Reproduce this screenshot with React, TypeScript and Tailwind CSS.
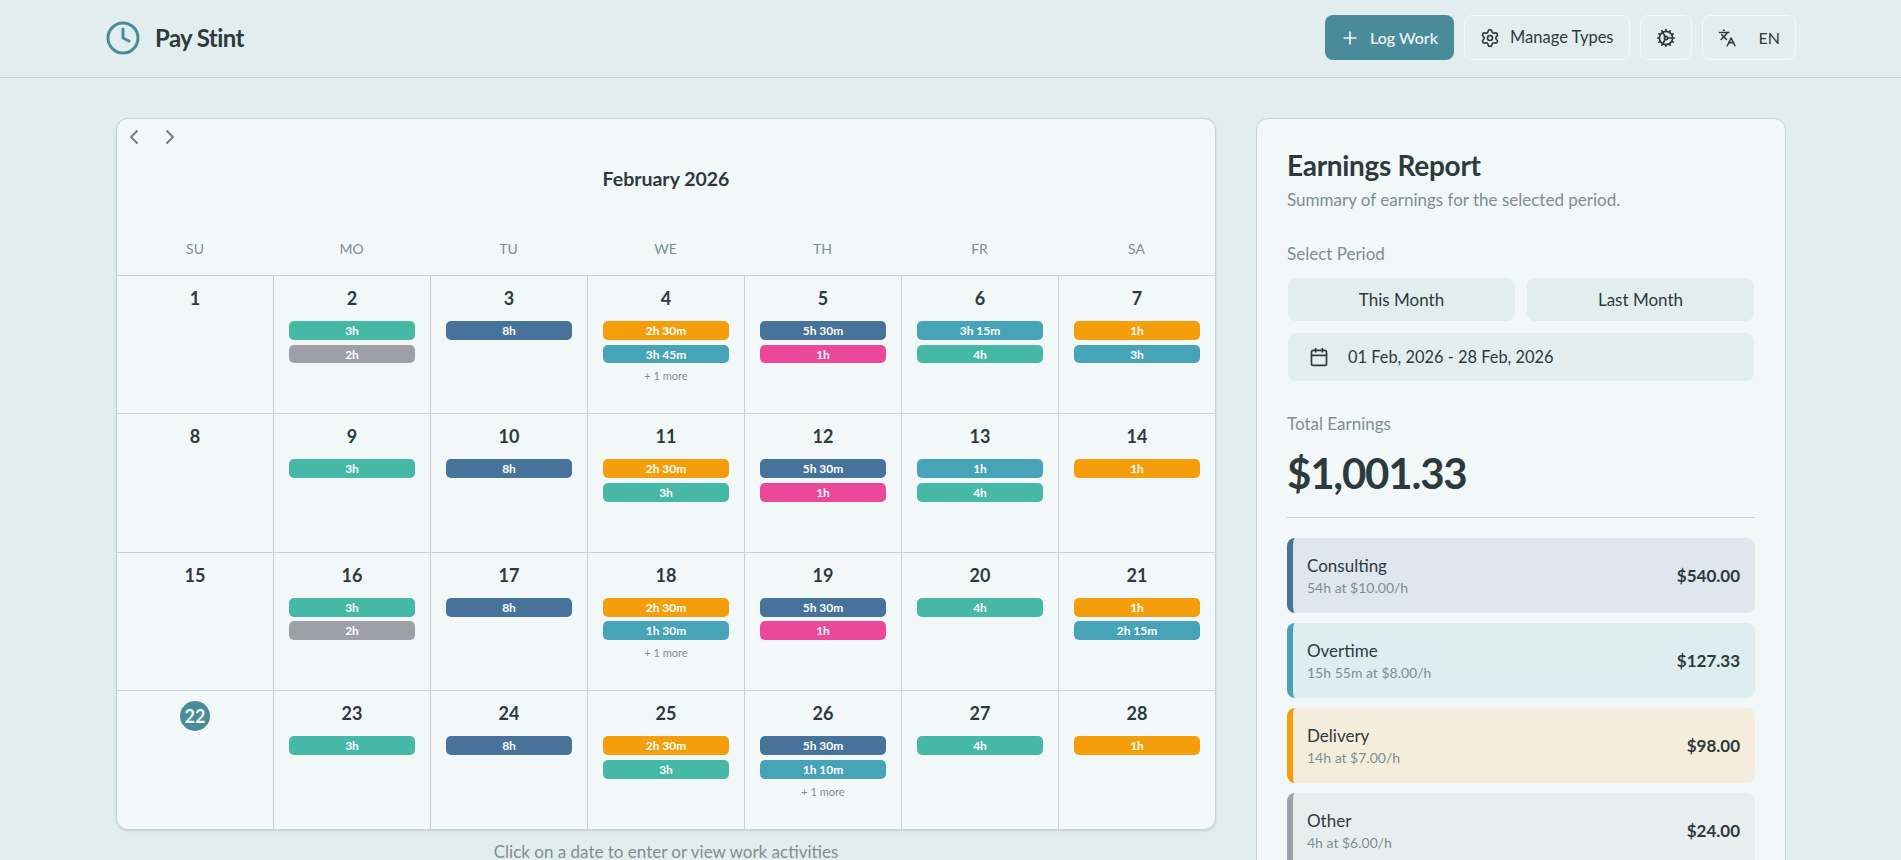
import { Calendar, ChevronLeft, ChevronRight, Clock, Cog, Languages, Plus, Settings } from "lucide-react";

const colores: Record<string, string> = {
  teal: "bg-[#45b8a6]",
  gray: "bg-[#9f9fa9]",
  blue: "bg-[#477299]",
  orange: "bg-[#f59e0b]",
  cyan: "bg-[#47a3b8]",
  pink: "bg-[#ec4899]",
};

type Dia = { dia: number; items: [string, string][]; mas?: boolean; hoy?: boolean };

const dias: Dia[] = [
  { dia: 1, items: [] },
  { dia: 2, items: [["3h", "teal"], ["2h", "gray"]] },
  { dia: 3, items: [["8h", "blue"]] },
  { dia: 4, items: [["2h 30m", "orange"], ["3h 45m", "cyan"]], mas: true },
  { dia: 5, items: [["5h 30m", "blue"], ["1h", "pink"]] },
  { dia: 6, items: [["3h 15m", "cyan"], ["4h", "teal"]] },
  { dia: 7, items: [["1h", "orange"], ["3h", "cyan"]] },
  { dia: 8, items: [] },
  { dia: 9, items: [["3h", "teal"]] },
  { dia: 10, items: [["8h", "blue"]] },
  { dia: 11, items: [["2h 30m", "orange"], ["3h", "teal"]] },
  { dia: 12, items: [["5h 30m", "blue"], ["1h", "pink"]] },
  { dia: 13, items: [["1h", "cyan"], ["4h", "teal"]] },
  { dia: 14, items: [["1h", "orange"]] },
  { dia: 15, items: [] },
  { dia: 16, items: [["3h", "teal"], ["2h", "gray"]] },
  { dia: 17, items: [["8h", "blue"]] },
  { dia: 18, items: [["2h 30m", "orange"], ["1h 30m", "cyan"]], mas: true },
  { dia: 19, items: [["5h 30m", "blue"], ["1h", "pink"]] },
  { dia: 20, items: [["4h", "teal"]] },
  { dia: 21, items: [["1h", "orange"], ["2h 15m", "cyan"]] },
  { dia: 22, items: [], hoy: true },
  { dia: 23, items: [["3h", "teal"]] },
  { dia: 24, items: [["8h", "blue"]] },
  { dia: 25, items: [["2h 30m", "orange"], ["3h", "teal"]] },
  { dia: 26, items: [["5h 30m", "blue"], ["1h 10m", "cyan"]], mas: true },
  { dia: 27, items: [["4h", "teal"]] },
  { dia: 28, items: [["1h", "orange"]] },
];

const semana = ["SU", "MO", "TU", "WE", "TH", "FR", "SA"];

const reporte = [
  { nombre: "Consulting", detalle: "54h at $10.00/h", total: "$540.00", fondo: "bg-[#dfe6ed]", borde: "border-[#477299]" },
  { nombre: "Overtime", detalle: "15h 55m at $8.00/h", total: "$127.33", fondo: "bg-[#deedf0]", borde: "border-[#47a3b8]" },
  { nombre: "Delivery", detalle: "14h at $7.00/h", total: "$98.00", fondo: "bg-[#f5eddb]", borde: "border-[#f59e0b]" },
  { nombre: "Other", detalle: "4h at $6.00/h", total: "$24.00", fondo: "bg-[#e8eeee]", borde: "border-[#9f9fa9]" },
];

export default function App() {
  return (
    <div className="h-screen overflow-hidden bg-[#e2eeee] text-[#2d3a3d] [font-family:Lato,sans-serif]">
      <header className="flex h-[78px] items-center justify-between border-b border-[#c3d4d7] pb-[2px] pl-[105px] pr-[105px]">
        <div className="flex items-center gap-[14px]">
          <Clock size={36} className="text-[#4a8b9a]" />
          <span className="text-[24px] font-bold tracking-[-0.6px]">Pay Stint</span>
        </div>

        <div className="flex items-center gap-[10px]">
          <button className="flex h-[45px] w-[129px] items-center gap-[10px] rounded-lg bg-[#4a8b9a] px-[15px] text-[16px] font-medium text-[#f2f8f8]">
            <Plus size={20} />
            Log Work
          </button>
          <button className="flex h-[45px] w-[166px] items-center gap-[10px] rounded-lg border border-[#f2f8f8] px-[15px] text-[16.5px]">
            <Settings size={20} />
            Manage Types
          </button>
          <button className="flex h-[45px] w-[52px] items-center justify-center rounded-lg border border-[#f2f8f8]">
            <Cog size={20} />
          </button>
          <button className="flex h-[45px] w-[94px] items-center gap-[22px] rounded-lg border border-[#f2f8f8] px-[15px] text-[16px]">
            <Languages size={20} />
            EN
          </button>
        </div>
      </header>

      <main className="flex gap-[40px] pl-[116px] pt-[40px]">
        <div className="w-[1100px]">
          <div className="rounded-xl border border-[#c3d4d7] bg-[#f2f8f8] shadow-sm">
            <div className="flex gap-[12px] pl-[5px] pt-[6px] text-[#777f80]">
              <ChevronLeft size={24} />
              <ChevronRight size={24} />
            </div>
            <h2 className="mt-[18px] text-center text-[19.5px] font-bold leading-[24px]">February 2026</h2>
            <div className="mt-[48px] grid grid-cols-[156px_repeat(6,1fr)] pb-[16px]">
              {semana.map((d) => (
                <div key={d} className="text-center text-[14px] leading-[20px] text-[#7d8e92]">
                  {d}
                </div>
              ))}
            </div>

            <div className="grid grid-cols-[156px_repeat(6,1fr)]">
              {dias.map((d, i) => (
                <div
                  key={d.dia}
                  className={`h-[138.4px] border-t border-[#c3d4d7] px-[15px] pt-[7px] ${i % 7 === 0 ? "" : "border-l"}`}
                >
                  {d.hoy ? (
                    <div className="mx-auto mt-[3px] flex h-[30px] w-[30px] items-center justify-center rounded-full bg-[#4a8b9a] text-[18px] font-bold text-[#f2f8f8]">
                      {d.dia}
                    </div>
                  ) : (
                    <div className="h-[30px] text-center text-[18px] font-bold leading-[30px]">{d.dia}</div>
                  )}
                  <div className="mt-[8px] flex flex-col gap-[4.8px]">
                    {d.items.map(([texto, color]) => (
                      <div
                        key={texto + color}
                        className={`h-[18.8px] rounded-[5px] text-center text-[12px] font-bold leading-[19px] text-white ${colores[color]}`}
                      >
                        {texto}
                      </div>
                    ))}
                  </div>
                  {d.mas && <div className="mt-[6px] text-center text-[11px] leading-[14px] text-[#7d8e92]">+ 1 more</div>}
                </div>
              ))}
            </div>
          </div>
          <p className="mt-[11px] text-center text-[17px] leading-[22px] text-[#7d8e92]">
            Click on a date to enter or view work activities
          </p>
        </div>

        <div className="w-[530px] shrink-0 rounded-xl border border-[#c3d4d7] bg-[#f2f8f8] p-[30px]">
          <h1 className="-mt-px text-[28px] font-bold leading-[34px] tracking-[-0.3px]">Earnings Report</h1>
          <p className="mt-[7px] text-[17px] leading-[22px] text-[#7d8e92]">Summary of earnings for the selected period.</p>

          <p className="mt-[32px] text-[17px] leading-[22px] text-[#7d8e92]">Select Period</p>
          <div className="mt-[13px] grid grid-cols-2 gap-[12px] px-px">
            <button className="h-[43px] rounded-lg bg-[#e2eeee] text-[17px]">This Month</button>
            <button className="h-[43px] rounded-lg bg-[#e2eeee] text-[17px]">Last Month</button>
          </div>
          <div className="mx-px mt-[12px] flex h-[48px] items-center gap-[19px] rounded-lg bg-[#e2eeee] pl-[21px] text-[16.4px]">
            <Calendar size={20} />
            01 Feb, 2026 - 28 Feb, 2026
          </div>

          <p className="mt-[32px] text-[17px] leading-[22px] text-[#7d8e92]">Total Earnings</p>
          <p className="mt-[12px] text-[42px] font-bold leading-[52px] tracking-[-1.2px]">$1,001.33</p>
          <div className="mt-[18px] h-px bg-[#c3d4d7]" />

          <div className="mt-[20px] flex flex-col gap-[10px]">
            {reporte.map((r) => (
              <div
                key={r.nombre}
                className={`flex h-[75px] items-center justify-between rounded-lg border-l-[6px] pl-[14px] pr-[15px] ${r.fondo} ${r.borde}`}
              >
                <div>
                  <div className="text-[17px] leading-[24px]">{r.nombre}</div>
                  <div className="text-[14px] leading-[20px] text-[#7d8e92]">{r.detalle}</div>
                </div>
                <div className="text-[17px] font-bold">{r.total}</div>
              </div>
            ))}
          </div>
        </div>
      </main>
    </div>
  );
}
